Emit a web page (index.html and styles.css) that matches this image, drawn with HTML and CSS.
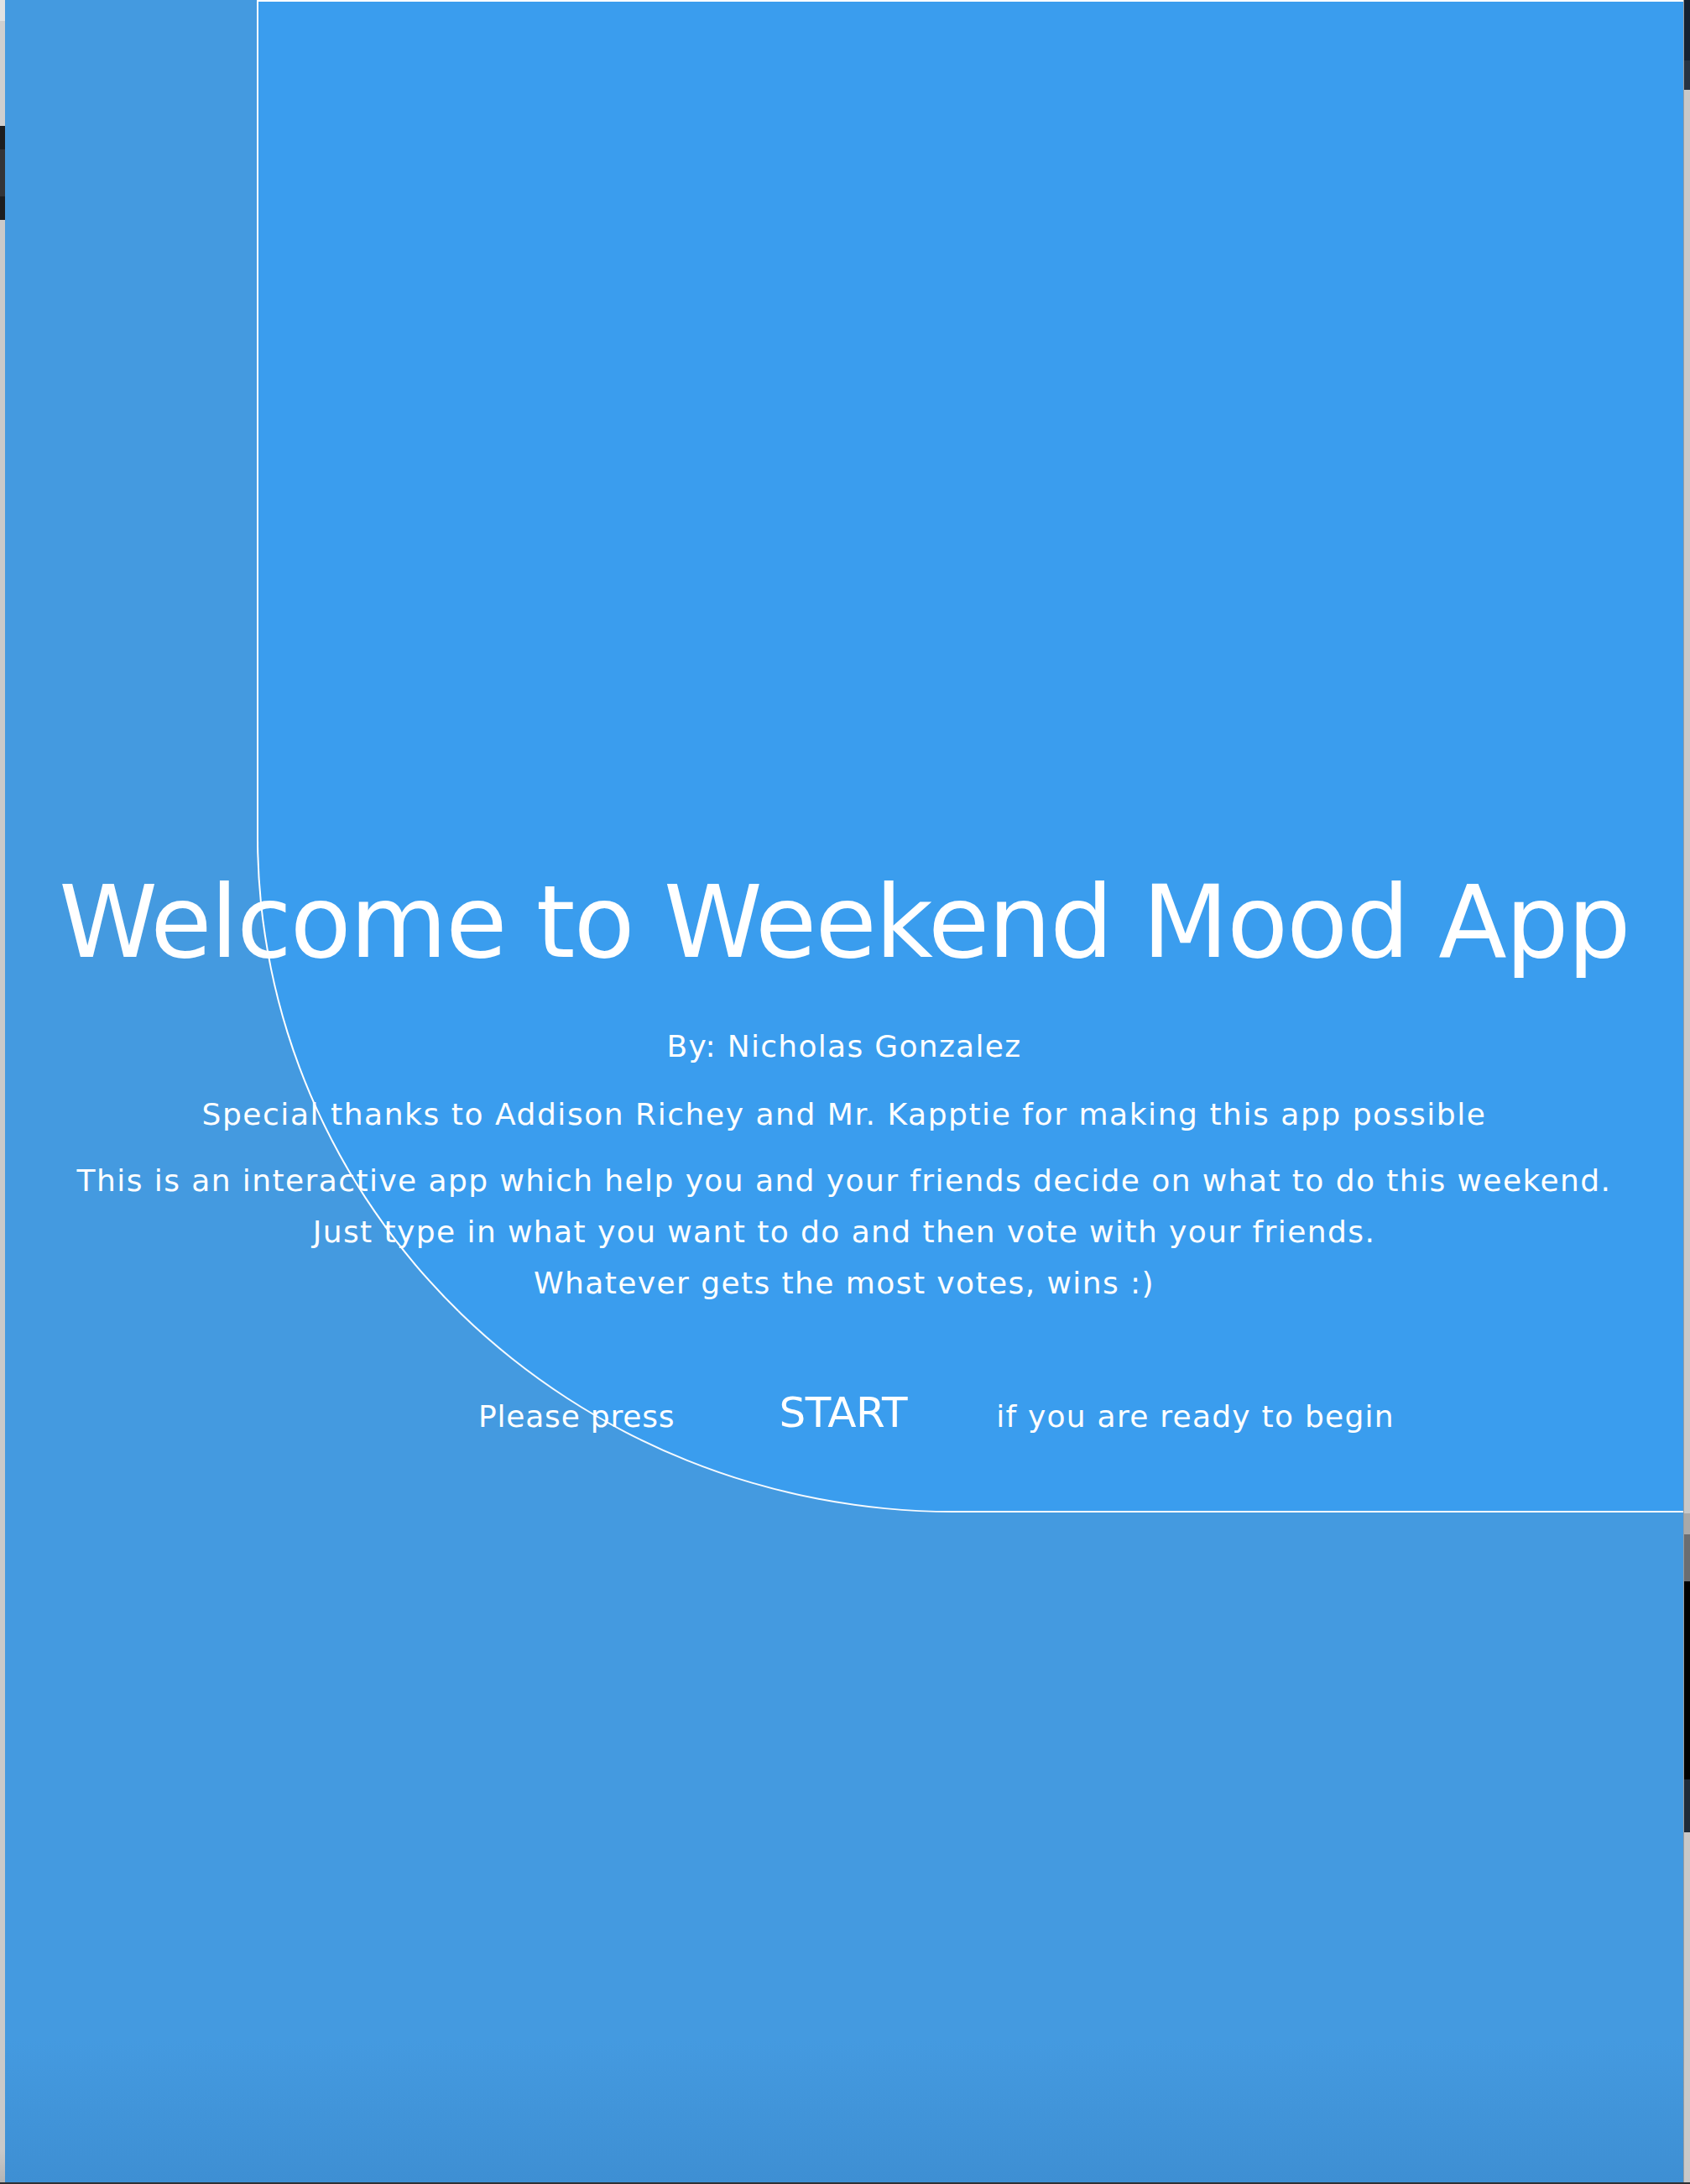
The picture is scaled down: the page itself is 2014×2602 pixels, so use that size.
FILE: index.html
```html
<!DOCTYPE html>
<html lang="en">
<head>
<meta charset="utf-8">
<title>Weekend Mood App</title>
<link rel="stylesheet" href="styles.css">
</head>
<body>
<div class="screen">
  <div class="strip strip-left">
    <div class="sl sl-top"></div>
    <div class="sl sl-grey1"></div>
    <div class="sl sl-dark"></div>
    <div class="sl sl-mid"></div>
    <div class="sl sl-dark2"></div>
    <div class="sl sl-grey2"></div>
  </div>
  <main class="window">
    <div class="panel"></div>
    <div class="content">
      <h1 class="title">Welcome to Weekend Mood App</h1>
      <p class="line byline">By: Nicholas Gonzalez</p>
      <p class="line thanks">Special thanks to Addison Richey and Mr. Kapptie for making this app possible</p>
      <p class="line intro">This is an interactive app which help you and your friends decide on what to do this weekend.<br>Just type in what you want to do and then vote with your friends.<br>Whatever gets the most votes, wins :)</p>
      <div class="start-row">
        <span class="start-label">Please press</span>
        <button class="start-btn" type="button">START</button>
        <span class="start-label start-label-end">if you are ready to begin</span>
      </div>
    </div>
  </main>
  <div class="strip strip-right">
    <div class="sr sr-navy"></div>
    <div class="sr sr-navy2"></div>
    <div class="sr sr-grey1"></div>
    <div class="sr sr-light"></div>
    <div class="sr sr-slate"></div>
    <div class="sr sr-black"></div>
    <div class="sr sr-navy3"></div>
    <div class="sr sr-grey2"></div>
  </div>
</div>
</body>
</html>
```

FILE: styles.css
```css
html, body {
  margin: 0;
  padding: 0;
}

body {
  width: 2014px;
  height: 2602px;
  background: #2e3134;
  overflow: hidden;
  font-family: "DejaVu Sans", Verdana, sans-serif;
}

.screen {
  display: flex;
  height: 2600px;
}

/* background slivers peeking out at the sides */
.strip {
  display: flex;
  flex-direction: column;
  flex: none;
}

.strip-left {
  width: 6px;
  background: #c9c9c9;
}

.sl-top { height: 25px; background: #e2e2e2; }
.sl-grey1 { height: 125px; background: #cfcfcf; }
.sl-dark { height: 28px; background: #1d1e20; }
.sl-mid { height: 56px; background: #343538; }
.sl-dark2 { height: 28px; background: #1d1e20; }
.sl-grey2 { flex: 1; background: linear-gradient(#c9c9c9, #c9c9c9 2300px, #b4b4b4); }

.strip-right {
  width: 8px;
  background: #c8c8c8;
  border-left: 1px solid #9c9c9c;
  box-sizing: border-box;
}

.sr-navy { height: 72px; background: #142131; }
.sr-navy2 { height: 35px; background: #263342; }
.sr-grey1 { height: 1696px; background: #c8c8c8; }
.sr-light { height: 25px; background: #a9a9a9; }
.sr-slate { height: 56px; background: #6b6e72; }
.sr-black { height: 236px; background: #000; }
.sr-navy3 { height: 63px; background: #1f2b39; }
.sr-grey2 { flex: 1; background: #c8c8c8; }

/* main app window */
.window {
  flex: none;
  width: 2000px;
  height: 2600px;
  display: grid;
  grid-template-columns: 100%;
  grid-template-rows: auto;
  align-items: start;
  background: linear-gradient(to bottom, #449ae0 0, #449ae0 2430px, #3e8fd3 2600px);
  color: #fff;
}

.panel {
  grid-area: 1 / 1;
  margin-left: 300px;
  height: 1802px;
  box-sizing: border-box;
  background: #3a9dee;
  border-top: 2px solid #fff;
  border-left: 2px solid #fff;
  border-bottom: 2px solid rgba(255, 255, 255, 0.95);
  border-bottom-left-radius: 830px 805px;
}

.content {
  grid-area: 1 / 1;
  padding-top: 1029px;
  display: flex;
  flex-direction: column;
  align-items: stretch;
  text-align: center;
}

.title {
  margin: 0;
  font-weight: normal;
  font-size: 119px;
  line-height: 140px;
  letter-spacing: -1.7px;
}

.line {
  margin: 0;
  font-size: 36px;
  line-height: 60px;
  letter-spacing: 1.42px;
}

.byline { margin-top: 48px; letter-spacing: 1.3px; }
.thanks { margin-top: 21px; letter-spacing: 1.55px; }
.intro { margin-top: 18px; line-height: 61px; }

.start-row {
  margin-top: 94px;
  display: flex;
  align-items: baseline;
  padding-left: 564px;
}

.start-label {
  font-size: 36px;
  line-height: 60px;
  letter-spacing: 0.8px;
}

.start-label-end {
  letter-spacing: 1.25px;
}

.start-btn {
  margin: 0 106px 0 124px;
  padding: 0;
  border: none;
  background: transparent;
  color: #fff;
  font-family: "DejaVu Sans", Verdana, sans-serif;
  font-size: 50px;
  line-height: 60px;
  letter-spacing: -0.3px;
}
```
